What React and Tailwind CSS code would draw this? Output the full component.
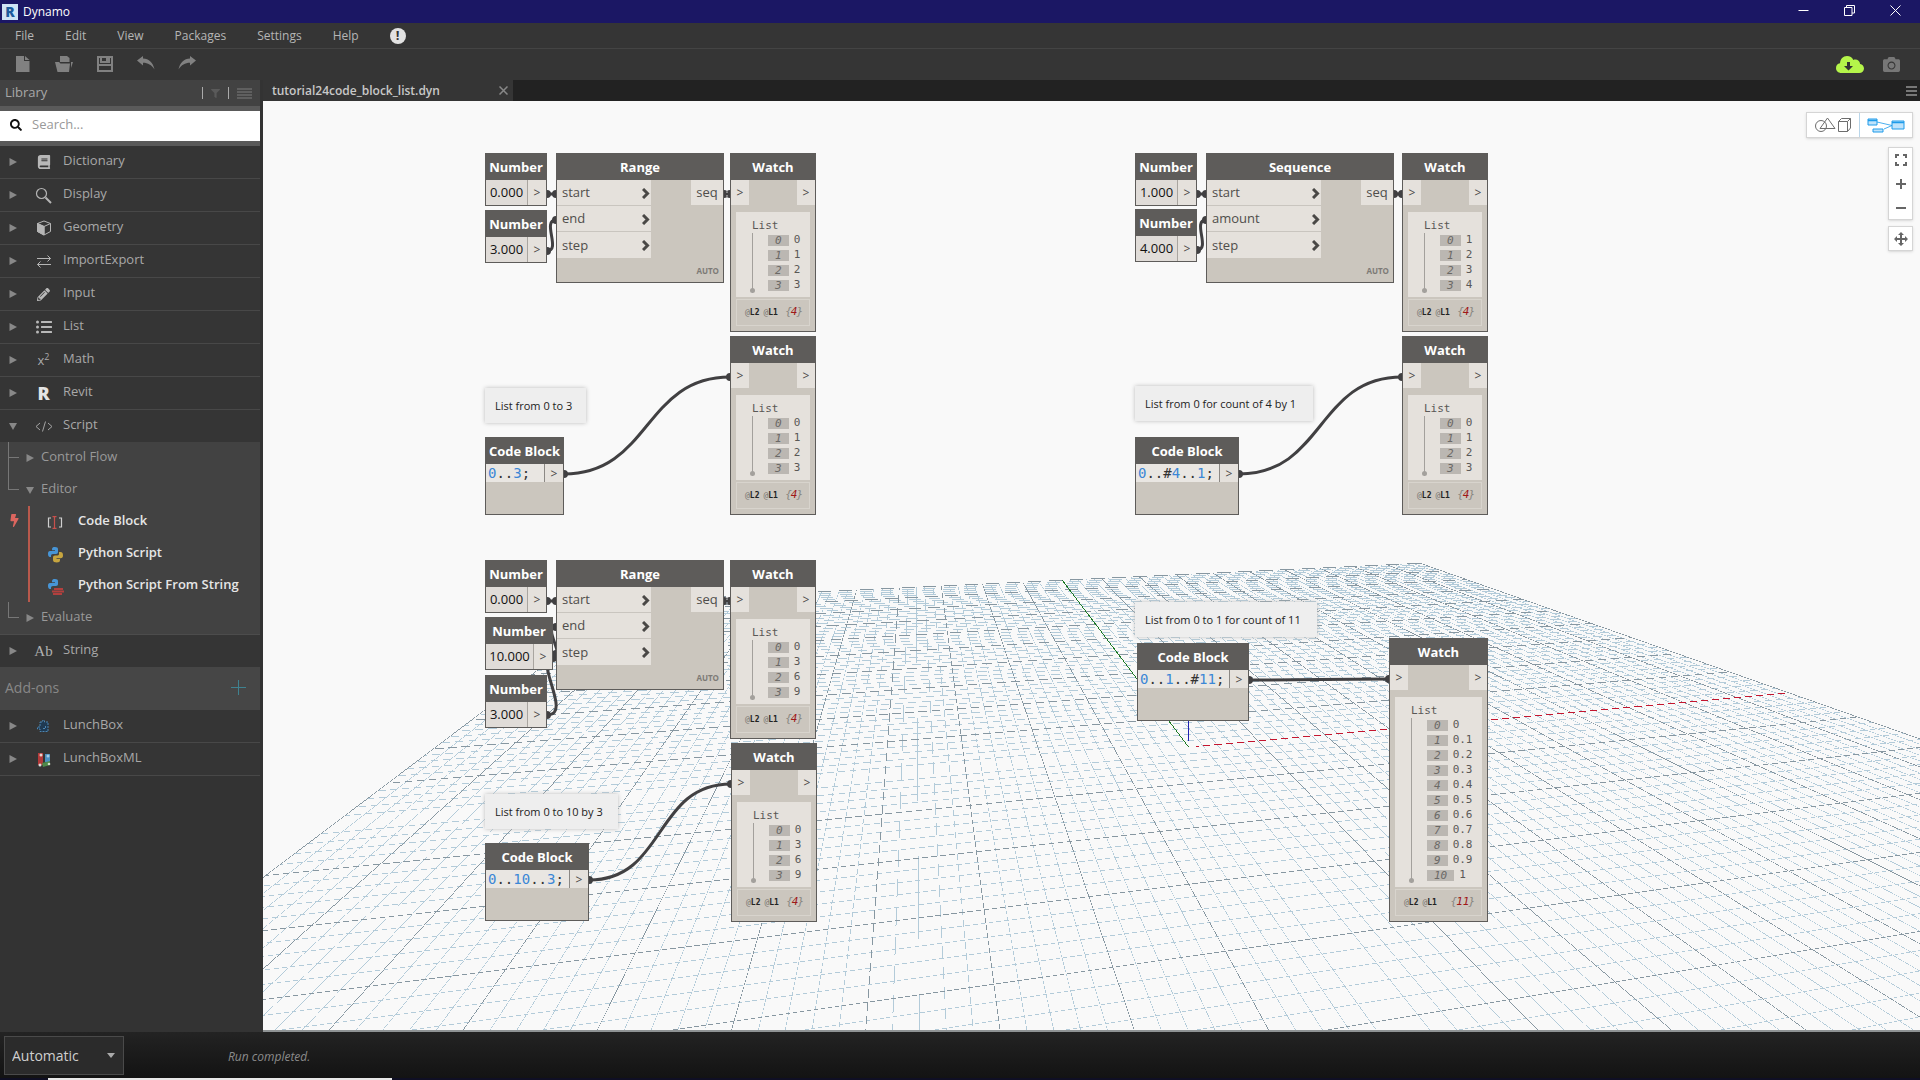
import React, { useState } from "react";
import { FaBolt, FaBook, FaCamera, FaFilter, FaListUl, FaPencilAlt, FaSearch } from "react-icons/fa";

/* ---------- canvas data (canvas pixels) ---------- */

const NODES = [
  { type: "number", x: 222, y: 52, w: 62, value: "0.000" },
  { type: "number", x: 222, y: 109, w: 62, value: "3.000" },
  { type: "range", x: 293, y: 52, w: 168, title: "Range", ports: ["start", "end", "step"] },
  { type: "watch", x: 467, y: 52, w: 86, items: ["0", "1", "2", "3"] },
  { type: "watch", x: 467, y: 235, w: 86, items: ["0", "1", "2", "3"] },
  { type: "code", x: 222, y: 336, w: 79, code: "0..3;" },

  { type: "number", x: 222, y: 459, w: 62, value: "0.000" },
  { type: "number", x: 222, y: 516, w: 68, value: "10.000" },
  { type: "number", x: 222, y: 574, w: 62, value: "3.000" },
  { type: "range", x: 293, y: 459, w: 168, title: "Range", ports: ["start", "end", "step"] },
  { type: "watch", x: 467, y: 459, w: 86, items: ["0", "3", "6", "9"] },
  { type: "watch", x: 468, y: 642, w: 86, items: ["0", "3", "6", "9"] },
  { type: "code", x: 222, y: 742, w: 104, code: "0..10..3;" },

  { type: "number", x: 872, y: 52, w: 62, value: "1.000" },
  { type: "number", x: 872, y: 108, w: 62, value: "4.000" },
  { type: "range", x: 943, y: 52, w: 188, title: "Sequence", ports: ["start", "amount", "step"] },
  { type: "watch", x: 1139, y: 52, w: 86, items: ["1", "2", "3", "4"] },
  { type: "watch", x: 1139, y: 235, w: 86, items: ["0", "1", "2", "3"] },
  { type: "code", x: 872, y: 336, w: 104, code: "0..#4..1;" },

  { type: "code", x: 874, y: 542, w: 112, code: "0..1..#11;" },
  {
    type: "watch",
    x: 1126,
    y: 537,
    w: 99,
    items: ["0", "0.1", "0.2", "0.3", "0.4", "0.5", "0.6", "0.7", "0.8", "0.9", "1"],
  },
];

const NOTES = [
  { x: 222, y: 287, w: 101, text: "List from 0 to 3" },
  { x: 222, y: 693, w: 133, text: "List from 0 to 10 by 3" },
  { x: 872, y: 285, w: 178, text: "List from 0 for count of 4 by 1" },
  { x: 872, y: 501, w: 182, text: "List from 0 to 1 for count of 11" },
];

const WIRES = [
  [284, 93, 293, 93],
  [284, 150, 293, 119],
  [461, 93, 467, 93],
  [301, 373, 467, 276],
  [284, 500, 293, 500],
  [290, 557, 293, 526],
  [284, 614, 293, 553],
  [461, 500, 467, 500],
  [326, 779, 468, 683],
  [934, 93, 943, 93],
  [934, 149, 943, 119],
  [1131, 93, 1139, 93],
  [976, 373, 1139, 276],
  [986, 579, 1126, 578],
];

/* ---------- background grid ---------- */

// ground plane (-1..1 on both axes) projected to the canvas
const project = (u, v) => {
  const w = 1 + 0.17514 * u + 0.8579 * v;
  return [(867.7 * u + 559 * v + 925.5) / w, (49.3 * u + 244 * v + 646) / w];
};

// A line thinner than a pixel only shows where it passes close to a pixel
// centre, so it breaks up once per pixel of its minor axis.
function thinLine([x1, y1], [x2, y2], visible) {
  const flat = Math.abs(x2 - x1) > Math.abs(y2 - y1);
  const forward = flat ? y2 > y1 : x2 > x1;
  const [ax, ay, bx, by] = forward ? [x1, y1, x2, y2] : [x2, y2, x1, y1];
  const step = Math.max(flat ? by - ay : bx - ax, 0.01);
  const period = Math.hypot(bx - ax, by - ay) / step;
  const start = flat ? ay : ax;
  return {
    d: `M${ax} ${ay}L${bx} ${by}`,
    strokeDasharray: `${period * visible} ${period * (1 - visible)}`,
    strokeDashoffset: (start - Math.floor(start)) * period,
  };
}

function buildGrid() {
  const near = 0.1;
  const minor = [];
  const major = [];
  for (let i = -50; i <= 50; i++) {
    if (i === 0) continue;
    const c = i / 50;
    const isMajor = i % 5 === 0;
    const out = isMajor ? major : minor;
    const visible = isMajor ? 0.65 : 0.6;
    // keep both ends in front of the camera
    const uMin = Math.max(-1, (near - 1 - 0.8579 * c) / 0.17514);
    const vMin = Math.max(-1, (near - 1 - 0.17514 * c) / 0.8579);
    if (uMin < 1) out.push(thinLine(project(uMin, c), project(1, c), visible));
    out.push(thinLine(project(c, vMin), project(c, 1), visible));
  }
  return { minor, major };
}

const GRID = buildGrid();
const ORIGIN = project(0, 0);
const AXIS_X = thinLine(project(0.01, 0), project(1, 0), 0.65);
const AXIS_Y = thinLine(ORIGIN, project(0, 1), 0.8);

function Grid() {
  return (
    <svg className="absolute inset-0 h-full w-full" fill="none" shapeRendering="crispEdges" aria-hidden="true">
      <g stroke="#b3cbd9">
        {GRID.minor.map((l) => (
          <path key={l.d} {...l} />
        ))}
      </g>
      <g stroke="#8797a1">
        {GRID.major.map((l) => (
          <path key={l.d} {...l} />
        ))}
      </g>
      <path {...AXIS_Y} stroke="#1c7a24" />
      <path {...AXIS_X} stroke="#c4162f" />
      <path d={`M${ORIGIN[0]} ${ORIGIN[1] - 6}V615`} stroke="#2020b0" />
    </svg>
  );
}

function Wires() {
  return (
    <svg className="absolute inset-0 h-full w-full" fill="none" aria-hidden="true">
      {WIRES.map(([x1, y1, x2, y2]) => {
        const dx = Math.max((x2 - x1) / 2, Math.hypot(x2 - x1, y2 - y1) * 0.45);
        return (
          <g key={`${x1}-${y1}`} stroke="#414042">
            <path d={`M${x1} ${y1}C${x1 + dx} ${y1} ${x2 - dx} ${y2} ${x2} ${y2}`} strokeWidth="3" />
            <path d={`M${x1} ${y1 - 4}a4 4 0 0 1 0 8zM${x2} ${y2 - 4}a4 4 0 0 0 0 8z`} fill="#414042" stroke="none" />
          </g>
        );
      })}
    </svg>
  );
}

/* ---------- nodes ---------- */

function Port({ className = "" }) {
  return (
    <div className={`flex w-[18px] items-center justify-center bg-[#e5e1dc] text-[12px] leading-none text-[#4a4846] ${className}`}>
      &gt;
    </div>
  );
}

function NumberNode({ node }) {
  return (
    <div className="flex h-[25px]">
      <input
        aria-label="Number"
        defaultValue={node.value}
        className="w-0 flex-1 border-r border-[#a9a5a0] bg-[#e0dcd8] text-center text-[13px] text-[#111] outline-none"
      />
      <Port className="pt-px" />
    </div>
  );
}

function RangeNode({ node }) {
  return (
    <div className="h-[102px]">
      <div className="flex items-start">
        <div className="mr-10 flex-1">
          {node.ports.map((p) => (
            <div
              key={p}
              className="flex h-[26px] items-center justify-between border-b border-[#c9c5bf] bg-[#e5e1dc] pt-px pr-px pl-[5px] text-[13px] text-[#4f4d4b] last:border-0"
            >
              {p}
              <svg width="8" height="11" viewBox="0 0 8 11" fill="none" stroke="#4a4846" strokeWidth="3">
                <path d="M1 1l4.5 4.5L1 10" />
              </svg>
            </div>
          ))}
        </div>
        <div className="flex h-[25px] w-8 items-center justify-center bg-[#e5e1dc] pt-px text-[13px] text-[#4f4d4b]">seq</div>
      </div>
      <div className="pt-[6px] pr-1 text-right text-[8px] leading-[14px] font-bold text-[#7d7a76]">AUTO</div>
    </div>
  );
}

function WatchNode({ node }) {
  return (
    <div className="pb-[5px]">
      <div className="flex h-[25px] justify-between">
        <Port className="pt-px" />
        <Port className="pt-px" />
      </div>
      <div className="mx-[5px] mt-[7px] bg-[#e5e1dc] pt-[6px] pb-1 pl-4 font-['DejaVu_Sans_Mono',monospace] text-[11px] text-[#5a5856]">
        <div className="leading-[15px]">List</div>
        <div className="relative">
          <div className="absolute top-0 bottom-0 left-0 w-px bg-[#a3a09c]" />
          <div className="absolute bottom-0 -left-[2px] size-[5px] rounded-full bg-[#a3a09c]" />
          <ol className="pl-4">
            {node.items.map((v, i) => (
              <li key={i} className="flex h-[15px] items-center gap-[5px]">
                <span className="bg-[#bbb7b2] px-[7px] text-[11px] leading-[11px] text-[#6b6966] italic">{i}</span>
                <span>{v}</span>
              </li>
            ))}
          </ol>
        </div>
      </div>
      <div className="mx-[5px] mt-[2px] flex h-[27px] items-center justify-between border border-[#d8d4cd] pr-[6px] pl-2 font-['DejaVu_Sans_Mono',monospace]">
        <div className="flex gap-1 text-[8px] font-bold text-[#222]">
          <span>
            <span className="font-normal text-[#77746f]">@</span>L2
          </span>
          <span>
            <span className="font-normal text-[#77746f]">@</span>L1
          </span>
        </div>
        <div className="flex text-[11px] text-[#88857f] italic">
          &#123;<span className="-mx-px text-[#a01818]">{node.items.length}</span>&#125;
        </div>
      </div>
    </div>
  );
}

function CodeNode({ node }) {
  return (
    <div className="h-[50px]">
      <div className="flex h-[18px]">
        <code className="flex-1 border-r border-[#8b8884] bg-[#e9e6e2] pl-[2px] font-['DejaVu_Sans_Mono',monospace] text-[14px] leading-[19px] text-[#333]">
          {node.code.split(/(\d+)/).map((part, i) =>
            /\d/.test(part) ? (
              <span key={i} className="text-[#3b87d6]">
                {part}
              </span>
            ) : (
              part
            )
          )}
        </code>
        <Port className="pt-px" />
      </div>
    </div>
  );
}

const BODIES = { number: NumberNode, range: RangeNode, watch: WatchNode, code: CodeNode };
const TITLES = { number: "Number", watch: "Watch", code: "Code Block" };

function Node({ node }) {
  const Body = BODIES[node.type];
  return (
    <div
      className="absolute border border-t-0 border-[#5e5c5a] bg-[#cbc6be]"
      style={{ left: node.x, top: node.y, width: node.w }}
    >
      <h3 className="-mx-px flex h-[27px] items-center justify-center bg-[#5e5c5a] pt-[2px] text-[13px] font-bold text-white">
        {node.title || TITLES[node.type]}
      </h3>
      <Body node={node} />
    </div>
  );
}

/* ---------- library icons ---------- */

const IconCube = () => (
  <svg width="16" height="16" viewBox="0 0 16 16" fill="none" stroke="#b5b5b5">
    <path d="M8 1l6.5 2.5v8L8 15l-6.5-3.5v-8z" />
    <path d="M1.5 3.5L8 6.5l6.5-3M8 6.5V15" />
    <path d="M1.5 3.5L8 6.5V15l-6.5-3.5z" fill="#b5b5b5" />
  </svg>
);

const IconLens = () => (
  <svg width="17" height="17" viewBox="0 0 17 17" fill="none" stroke="#b5b5b5" strokeWidth="1.2">
    <circle cx="6.5" cy="6.5" r="5" />
    <path d="M10.5 10.5l5.5 5.5" strokeWidth="2" />
  </svg>
);

const IconSwap = () => (
  <svg width="16" height="13" viewBox="0 0 16 13" fill="none" stroke="#b5b5b5">
    <path d="M1 3.5h13.500M11.500.5l3 3-3 3M15 9.500H1.500M4.500 6.500l-3 3 3 3" />
  </svg>
);

const IconCode = () => (
  <svg width="18" height="11" viewBox="0 0 18 11" fill="none" stroke="#a5a5a5">
    <path d="M5 2L1 5.500 5 9M13 2l4 3.500L13 9M10.500.5l-3 10" />
  </svg>
);

const IconCodeBlock = () => (
  <svg width="16" height="13" viewBox="0 0 16 13" fill="none">
    <path d="M4 2H1.500v9H4M12 2h2.500v9H12" stroke="#d0d0d0" strokeWidth="1.2" />
    <path d="M5.500 .6h4M5.500 12.400h4M7.500 .6v11.800" stroke="#c8504c" strokeWidth="1.200" />
  </svg>
);

const IconPython = ({ fromString }) => (
  <svg width="17" height="17" viewBox="0 0 17 17" fill="none">
    <path
      d="M5 3.500C5 1.500 6 1 8 1s3 .7 3 2.500V6c0 1.300-.7 2-2 2H6c-1.400 0-2 .8-2 2v1H3c-1.500 0-2-1.300-2-3.200S1.600 5 3 5h5v-.8H5z"
      fill="#4795d6"
    />
    {fromString ? (
      <path d="M7 10h9v2H7zM5 12.500h12v2H5zM6 15h9v2H6z" fill="#b2403e" />
    ) : (
      <path
        d="M12 6h1.500c1.500 0 2.500 1 2.500 3.200s-.8 3-2.500 3H9.500v.8H13v1c0 1.800-1.200 2.500-3.200 2.500S6 15.800 6 14v-2.500c0-1.300.8-2 2-2h2.500c1 0 1.500-.7 1.500-1.700z"
        fill="#c7a53f"
      />
    )}
  </svg>
);

const IconPuzzle = () => (
  <svg width="15" height="15" viewBox="0 0 15 15" fill="#1f3a52" stroke="#4d86b3" strokeDasharray="2 1">
    <path d="M4 3h2.500V1.500h2V3H12v9.500H4V10H1.500V8H4z" />
    <path d="M7 9.500h2.500V7" fill="none" />
  </svg>
);

const IconBoxes = () => (
  <svg width="14" height="15" viewBox="0 0 14 15">
    <path d="M1 1h5v12H1z" fill="#b33a3a" />
    <path d="M8 2h5v8H8z" fill="#4b8fc0" />
    <path d="M5 11l8-2v4l-7 2z" fill="#4d8a4a" />
    <circle cx="4" cy="3" r="1.500" fill="#e4d5d0" />
    <circle cx="11" cy="4" r="1.500" fill="#a9cfe4" />
    <circle cx="3" cy="13" r="1.500" fill="#ddd" />
    <circle cx="12" cy="12" r="1.300" fill="#cfe0c8" />
  </svg>
);

const Triangle = ({ open }) => (
  <svg width="8" height="8" viewBox="0 0 8 8" fill="#888" className="shrink-0">
    {open ? <path d="M0 1h8L4 8z" /> : <path d="M.5 0L8 4 .5 8z" />}
  </svg>
);

const CATEGORIES = [
  { name: "Dictionary", icon: <FaBook size={14} color="#b8b8b8" /> },
  { name: "Display", icon: <IconLens /> },
  { name: "Geometry", icon: <IconCube /> },
  { name: "ImportExport", icon: <IconSwap /> },
  { name: "Input", icon: <FaPencilAlt size={13} color="#b8b8b8" /> },
  { name: "List", icon: <FaListUl size={16} color="#b8b8b8" /> },
  {
    name: "Math",
    icon: (
      <span className="text-[13px] leading-none text-[#aaa]">
        x<sup className="text-[9px]">2</sup>
      </span>
    ),
  },
  { name: "Revit", icon: <span className="text-[18px] leading-none font-extrabold text-[#e4e4e4]">R</span> },
  { name: "Script", icon: <IconCode />, open: true, flush: true },
];

// flush: no divider below the row
function Category({ name, icon, open, flush }) {
  return (
    <button
      className={`flex w-full items-center bg-[#353535] pl-[9px] text-left text-[13px] text-[#a8a8a8] ${
        flush ? "h-8" : "h-[33px] border-b border-[#484848]"
      }`}
    >
      <Triangle open={open} />
      <span className="mr-[9px] ml-4 flex w-[21px] shrink-0 justify-center">{icon}</span>
      <span className="pb-[2px]">{name}</span>
    </button>
  );
}

// last: the branch line stops at this row
function SubCategory({ name, open, last }) {
  return (
    <button className="flex h-8 w-full items-center pl-2 text-left text-[13px] text-[#999]">
      <span className="flex h-8 w-[11px] flex-col">
        <span className="h-4 border-b border-l border-[#777]" />
        {!last && <span className="h-4 border-l border-[#777]" />}
      </span>
      <span className="mx-[7px] flex">
        <Triangle open={open} />
      </span>
      <span className="pb-[2px]">{name}</span>
    </button>
  );
}

function Library() {
  const items = [
    { name: "Code Block", icon: <IconCodeBlock /> },
    { name: "Python Script", icon: <IconPython /> },
    { name: "Python Script From String", icon: <IconPython fromString /> },
  ];
  return (
    <aside className="flex w-[263px] shrink-0 flex-col bg-[#333] pr-[3px]">
      <div className="flex h-[26px] items-center justify-between bg-[#424242] pr-2 pl-[5px] text-[13px] text-[#a8a8a8]">
        <h2>Library</h2>
        <div className="flex items-center gap-2 text-[#5a5a5a]">
          <span className="h-3 w-px bg-[#aaa]" />
          <FaFilter size={9} />
          <span className="h-3 w-px bg-[#aaa]" />
          <svg width="15" height="11" viewBox="0 0 15 11" stroke="#5f5f5f" strokeWidth="2">
            <path d="M0 1h15M0 4h15M0 7h15M0 10h15" />
          </svg>
        </div>
      </div>
      <div className="border-y-[5px] border-[#5a5a5a] bg-white">
        <label className="flex h-[30px] items-center gap-[10px] pb-[2px] pl-[10px]">
          <FaSearch size={12} color="#111" />
          <input
            aria-label="Search"
            placeholder="Search..."
            className="w-0 flex-1 text-[13px] text-[#333] outline-none placeholder:text-[#999]"
          />
        </label>
      </div>

      {CATEGORIES.map((c) => (
        <Category key={c.name} {...c} />
      ))}

      <div className="border-b border-[#4c4c4c] bg-[#424242]">
        <SubCategory name="Control Flow" />
        <SubCategory name="Editor" open last />
        <div className="flex">
          <span className="mt-2 ml-2 flex w-5">
            <FaBolt size={13} color="#dc665f" />
          </span>
          <div className="flex-1 border-l-2 border-[#b9594c]">
            {items.map((it) => (
              <button key={it.name} className="flex h-8 w-full items-center text-left text-[13px] font-semibold text-[#e6e6e6]">
                <span className="mr-[6px] ml-4 flex w-[26px] justify-center pr-2">{it.icon}</span>
                <span className="pb-[2px] whitespace-nowrap">{it.name}</span>
              </button>
            ))}
          </div>
        </div>
        <SubCategory name="Evaluate" last />
      </div>
      <Category
        name="String"
        flush
        icon={<span className="font-['Liberation_Serif',serif] text-[15px] leading-none text-[#b0b0b0]">Ab</span>}
      />
      <div className="flex h-[43px] items-center justify-between bg-[#464646] pr-[14px] pb-[2px] pl-[5px] text-[14px] text-[#888]">
        <h2>Add-ons</h2>
        <button aria-label="Add package">
          <svg width="15" height="15" viewBox="0 0 15 15" stroke="#3f8290" fill="none">
            <path d="M7.500 0v15M0 7.500h15" />
          </svg>
        </button>
      </div>
      <Category name="LunchBox" icon={<IconPuzzle />} />
      <Category name="LunchBoxML" icon={<IconBoxes />} />
    </aside>
  );
}

/* ---------- top bars ---------- */

function TitleBar() {
  return (
    <header className="flex h-[23px] shrink-0 items-center bg-[#1b1764] px-[2px] text-[12px] text-white">
      <span className="flex h-4 w-4 items-center justify-center bg-[#cfe4f5] text-[14px] leading-none font-extrabold text-[#1d5c9c]">
        R
      </span>
      <h1 className="ml-[5px] flex-1">Dynamo</h1>
      <div className="flex pb-[2px]">
        <button aria-label="Minimize" className="flex w-[46px] justify-center">
          <svg width="11" height="11" viewBox="0 0 11 11" stroke="#fff" fill="none">
            <path d="M.5 5.500h10" />
          </svg>
        </button>
        <button aria-label="Restore" className="flex w-[46px] justify-center">
          <svg width="11" height="11" viewBox="0 0 11 11" stroke="#fff" fill="none">
            <path d="M.5 2.500h7.500v8H.5zM2.500 2.500v-2h8v7.500H8" />
          </svg>
        </button>
        <button aria-label="Close" className="flex w-[46px] justify-center">
          <svg width="11" height="11" viewBox="0 0 11 11" stroke="#fff" fill="none">
            <path d="M.5.5l10 10M10.500.5l-10 10" />
          </svg>
        </button>
      </div>
    </header>
  );
}

function MenuBar() {
  return (
    <nav className="flex h-[26px] shrink-0 items-center gap-[31px] border-b border-[#444] bg-[#353535] pl-[15px] text-[12px] text-[#b5b5b5]">
      {["File", "Edit", "View", "Packages", "Settings", "Help"].map((m) => (
        <button key={m}>{m}</button>
      ))}
      <button
        aria-label="Notifications"
        className="flex size-4 items-center justify-center rounded-full bg-[#e2e2e2] text-[13px] leading-none font-bold text-[#333]"
      >
        !
      </button>
    </nav>
  );
}

function Toolbar() {
  return (
    <div className="flex h-[31px] shrink-0 items-center bg-[#353535] pb-px pl-[2px]">
      <button aria-label="New" className="flex w-[41px] justify-center">
        <svg width="14" height="16" viewBox="0 0 14 16" fill="#818181">
          <path d="M0 0h8v5h5.500v11H0zM9 0l4.500 4H9z" />
        </svg>
      </button>
      <button aria-label="Open" className="flex w-[41px] justify-center">
        <svg width="18" height="16" viewBox="0 0 18 16" fill="#818181">
          <path d="M5 0h7l2.500 2v4H5zM0 6h4l1.500 1.500H15L14 16H2.500zM16 6h2l-2 6z" />
        </svg>
      </button>
      <button aria-label="Save" className="flex w-[41px] justify-center">
        <svg width="16" height="16" viewBox="0 0 16 16" fill="none" stroke="#818181" strokeWidth="2">
          <path d="M1 1h14v14H1zM4 1v5h8V1M1 9h14M10 2v3" />
        </svg>
      </button>
      <button aria-label="Undo" className="flex w-[41px] justify-center pb-[2px]">
        <svg width="18" height="14" viewBox="0 0 18 14" fill="#818181">
          <path d="M0 4.500L6 0v2.500c6 0 10 4 11.500 11C14.500 9 11 6.800 6 6.800V9.500z" />
        </svg>
      </button>
      <button aria-label="Redo" className="flex w-[41px] justify-center pb-[2px]">
        <svg width="18" height="14" viewBox="0 0 18 14" fill="#818181">
          <path d="M18 4.500L12 0v2.500C6 2.500 2 6.500.5 13.500 3.500 9 7 6.800 12 6.800V9.500z" />
        </svg>
      </button>
      <div className="ml-auto flex items-center gap-[17px] pr-[18px]">
        <button aria-label="Updates">
          <svg width="28" height="17" viewBox="0 0 28 17">
            <path
              d="M5.500 17C2 17 0 14.800 0 12c0-2.500 1.500-4.300 4-4.700C4.300 3 7 0 11 0c3 0 5.300 1.600 6.300 4 .6-.3 1.300-.4 2-.4 2.600 0 4.500 1.800 4.800 4.300 2.400.4 3.900 2.200 3.900 4.500 0 2.700-2 4.600-4.800 4.600z"
              fill="#b5f54a"
            />
            <path d="M11 6h3v4h3l-4.500 4.500L8 10h3z" fill="#333" />
          </svg>
        </button>
        <button aria-label="Export image">
          <FaCamera size={21} color="#777" className="h-[17px]" />
        </button>
      </div>
    </div>
  );
}

function CanvasControls() {
  const panel = "border border-[#d5d5d5] bg-white shadow-sm";
  return (
    <div className="absolute top-[11px] right-[7px] flex flex-col items-end text-[#666]">
      <div className={`flex h-[26px] ${panel}`}>
        <button aria-label="3D view" className="flex w-[53px] items-center justify-center border-r border-[#b9d6ea]">
          <svg width="38" height="16" viewBox="0 0 38 16" fill="none" stroke="#6d6d6d">
            <circle cx="7" cy="9" r="5.500" />
            <path d="M13.500 1L21 11.500H6zM24.500 4.500h9v10h-9zM24.500 4.500l3-3h9v9.500l-3 3.500M33.500 4.500l3-3" />
          </svg>
        </button>
        <button aria-label="Graph view" className="flex w-[52px] items-center justify-center">
          <svg width="38" height="15" viewBox="0 0 38 15" fill="#bfe3fb" stroke="#1e9bea">
            <path d="M10 4l15 3.500L17 11" fill="none" strokeWidth=".8" />
            <path d="M1 1h9v6H1zM25 3h12v8H25zM6 11h10v3H6z" />
            <path d="M1 2.500h9M25 4.500h12" strokeWidth="1.500" />
          </svg>
        </button>
      </div>
      <div className={`mt-[9px] flex w-[25px] flex-col ${panel}`}>
        <button aria-label="Fit" className="flex h-6 items-center justify-center">
          <svg width="12" height="12" viewBox="0 0 12 12" fill="none" stroke="#666" strokeWidth="2">
            <path d="M1 4V1h3M8 1h3v3M11 8v3H8M4 11H1V8" />
          </svg>
        </button>
        <button aria-label="Zoom in" className="flex h-6 items-center justify-center">
          <svg width="10" height="10" viewBox="0 0 10 10" stroke="#666" strokeWidth="2">
            <path d="M5 0v10M0 5h10" />
          </svg>
        </button>
        <button aria-label="Zoom out" className="flex h-[23px] items-center justify-center">
          <svg width="10" height="10" viewBox="0 0 10 10" stroke="#666" strokeWidth="2">
            <path d="M0 5h10" />
          </svg>
        </button>
      </div>
      <button aria-label="Pan" className={`mt-[6px] flex size-[25px] items-center justify-center ${panel}`}>
        <svg width="14" height="14" viewBox="0 0 14 14" fill="#666">
          <path d="M7 0l3 3H8v3h3V4l3 3-3 3V8H8v3h2l-3 3-3-3h2V8H3v2L0 7l3-3v2h3V3H4z" />
        </svg>
      </button>
    </div>
  );
}

export default function App() {
  const [mode, setMode] = useState("Automatic");

  return (
    <div className="flex h-screen flex-col overflow-hidden bg-[#353535] font-['Open_Sans','Noto_Sans',sans-serif]">
      <TitleBar />
      <MenuBar />
      <Toolbar />

      <div className="flex min-h-0 flex-1">
        <Library />
        <main className="flex min-w-0 flex-1 flex-col">
          <div className="flex h-[21px] shrink-0 items-center justify-between bg-[#222] pr-[3px]">
            <div className="flex h-full w-[250px] items-center justify-between bg-[#353535] pr-[5px] pl-[9px] text-[12px] font-semibold text-[#c8c8c8]">
              tutorial24code_block_list.dyn
              <button aria-label="Close tab">
                <svg width="9" height="9" viewBox="0 0 9 9" stroke="#888" strokeWidth="1.500">
                  <path d="M.5.5l8 8M8.500.5l-8 8" />
                </svg>
              </button>
            </div>
            <button aria-label="Tabs">
              <svg width="11" height="10" viewBox="0 0 11 10" stroke="#777" strokeWidth="2">
                <path d="M0 1h11M0 5h11M0 9h11" />
              </svg>
            </button>
          </div>

          <div className="relative flex-1 overflow-hidden border-b-2 border-[#8f9394] bg-[#f9f9f9]">
            <Grid />
            <Wires />
            {NOTES.map((n) => (
              <div
                key={n.text}
                className="absolute flex h-[35px] items-center bg-[#eeeeee] pt-px pl-[10px] text-[11px] whitespace-nowrap text-[#222] shadow-[0_0_4px_#bbb]"
                style={{ left: n.x, top: n.y, width: n.w }}
              >
                {n.text}
              </div>
            ))}
            {NODES.map((n) => (
              <Node key={`${n.x}-${n.y}`} node={n} />
            ))}
            <CanvasControls />
          </div>
        </main>
      </div>

      <footer className="shrink-0 bg-[#181818]">
        <div className="flex h-[46px] items-center bg-linear-to-b from-[#232323] to-[#131313] pl-1">
          <div className="relative w-[120px]">
            <select
              aria-label="Run mode"
              value={mode}
              onChange={(e) => setMode(e.target.value)}
              className="h-[39px] w-full appearance-none border border-[#4a4a4a] bg-[#2b2b2b] pl-[7px] text-[14px] text-[#cfcfcf]"
            >
              <option>Automatic</option>
              <option>Manual</option>
            </select>
            <svg className="pointer-events-none absolute top-[17px] right-[9px]" width="8" height="5" viewBox="0 0 8 5" fill="#aaa">
              <path d="M0 0h8L4 5z" />
            </svg>
          </div>
          <p className="ml-[104px] pt-[3px] text-[12px] text-[#8b8b8b] italic">Run completed.</p>
        </div>
        <div className="h-[2px] bg-[#0f0f24]">
          <div className="ml-12 h-[2px] w-[344px] bg-[#e8e8e8]" />
        </div>
      </footer>
    </div>
  );
}
